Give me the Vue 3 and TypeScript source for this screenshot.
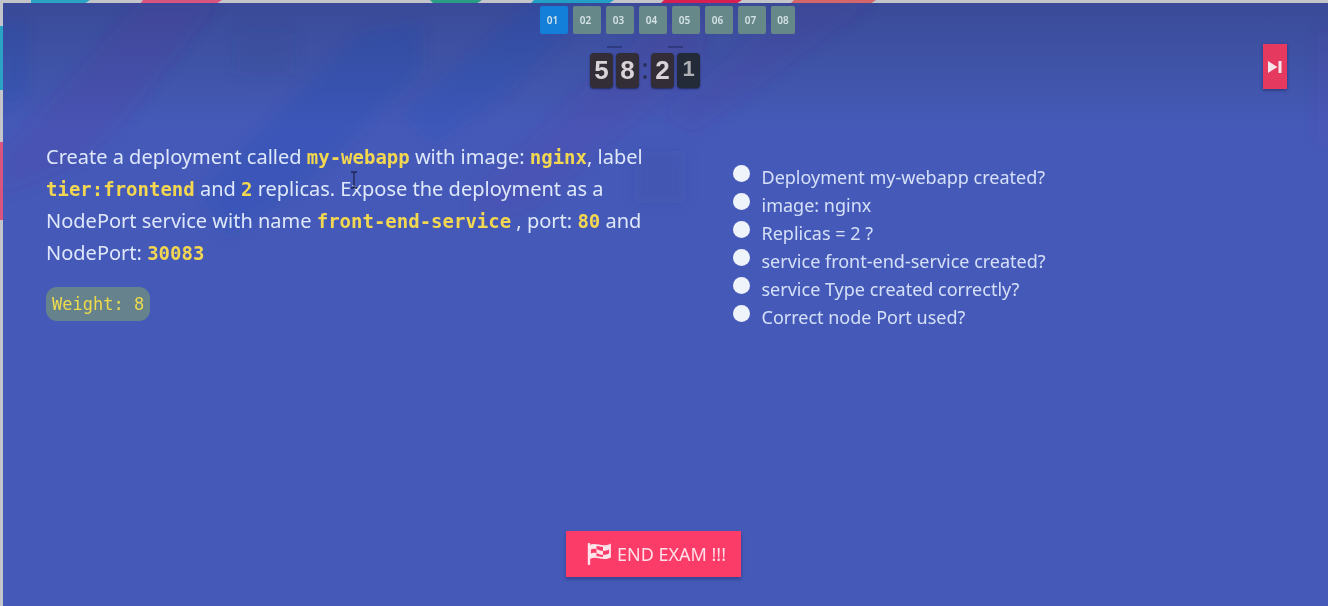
<script setup lang="ts">
import { ref } from 'vue'

interface Part {
  text: string
  code?: boolean
}

const questions: string[] = ['01', '02', '03', '04', '05', '06', '07', '08']
const current = ref('01')

const prompt: Part[] = [
  { text: 'Create a deployment called ' },
  { text: 'my-webapp', code: true },
  { text: ' with image: ' },
  { text: 'nginx', code: true },
  { text: ', label ' },
  { text: 'tier:frontend', code: true },
  { text: ' and ' },
  { text: '2', code: true },
  { text: ' replicas. Expose the deployment as a NodePort service with name ' },
  { text: 'front-end-service', code: true },
  { text: ' , port: ' },
  { text: '80', code: true },
  { text: ' and NodePort: ' },
  { text: '30083', code: true },
]

const checks: string[] = [
  'Deployment my-webapp created?',
  'image: nginx',
  'Replicas = 2 ?',
  'service front-end-service created?',
  'service Type created correctly?',
  'Correct node Port used?',
]
</script>

<template>
  <div class="page">
    <svg class="edge" aria-hidden="true">
      <path fill="#2ba3c4" d="M31 0H90L84 4H31Z" />
      <path fill="#d8557f" d="M143 0H222L216 4H140Z" />
      <path fill="#2b9c86" d="M430 0H482L476 4H434Z" />
      <path fill="#229fc5" d="M534 0H614L608 4H530Z" />
      <path fill="#d81f52" d="M664 0H742L736 4H660Z" />
      <path fill="#d4656a" d="M794 0H876L870 4H790Z" />
      <path fill="#2ba3c4" d="M0 26H4V90H0Z" />
      <path fill="#d8557f" d="M0 142H4V220H0Z" />
    </svg>

    <main class="panel">
      <svg class="streaks" aria-hidden="true">
        <defs>
          <filter id="soft" x="-20%" y="-20%" width="140%" height="140%">
            <feGaussianBlur stdDeviation="7" />
          </filter>
        </defs>
        <g filter="url(#soft)">
          <path fill="#5a2a9c" opacity=".15" d="M137 0H215L128 108Q95 150 50 170L0 190V150Z" />
          <path fill="#1747b8" opacity=".14" d="M355 30L418 20V70L340 145Q300 190 225 235L195 190Z" />
          <path fill="#1747b8" opacity=".14" d="M0 20H24V90L0 110Z" />
          <path fill="#2f3a80" opacity=".13" d="M234 30H290V72H234Z" />
          <path fill="#1747c0" opacity=".13" d="M528 0H600L490 100L430 140L400 110Z" />
          <path fill="#5a2a9c" opacity=".13" d="M640 30L700 10V60L560 180Q520 220 470 215V190Z" />
          <path fill="#5a2a9c" opacity=".12" d="M790 0H868L760 80L690 130L660 110Z" />
          <path fill="#2f3a80" opacity=".1" d="M632 148H682V200H632Z" />
          <path fill="#6a3aac" opacity=".12" d="M1314 30H1330V140H1314Z" />
        </g>
      </svg>

      <nav class="pager" aria-label="Questions">
        <button
          v-for="q in questions"
          :key="q"
          type="button"
          class="page-btn"
          :class="{ active: q === current }"
          @click="current = q"
        >{{ q }}</button>
      </nav>

      <div class="bar">
        <div class="timer" role="timer">
          <div class="pair">
            <span class="digit">5</span><span class="digit">8</span>
          </div>
          <span class="colon"><i></i><i></i></span>
          <div class="pair">
            <span class="digit">2</span><span class="digit flip">1</span>
          </div>
        </div>
        <button type="button" class="skip" aria-label="Next question">
          <svg width="14" height="12" viewBox="0 0 14 12" aria-hidden="true">
            <path fill="#f4e4ec" d="M0 0L9.500 6L0 12ZM10.500 0H13.500V12H10.500Z" />
          </svg>
        </button>
      </div>

      <div class="content">
        <section class="task">
          <p class="prompt"><template v-for="(p, i) in prompt" :key="i"><code v-if="p.code">{{ p.text }}</code><template v-else>{{ p.text }}</template></template></p>
          <span class="weight">Weight: 8</span>
        </section>
        <ul class="checks">
          <li v-for="(c, i) in checks" :key="c">
            <input :id="'check' + i" type="radio" :name="'check' + i" />
            <label :for="'check' + i">{{ c }}</label>
          </li>
        </ul>
      </div>

      <footer class="footer">
        <button type="button" class="end">
          <svg width="24" height="22" viewBox="0 0 24 22" aria-hidden="true">
            <path fill="none" stroke="#ffe3ea" stroke-width="2.400" stroke-linecap="round" d="M2 1V21" />
            <path fill="none" stroke="#ffe3ea" stroke-width="1.800" d="M3 3C9 -1 14 6 23 2V14C14 18 10 11 3 15Z" />
            <path fill="#ffe3ea" d="M3 3Q6 1 9.500 2V6Q6 5 3 7ZM16 4Q20 4 23 2V6Q20 8 16 8ZM9.500 6Q13 8 16 8V12Q13 12 9.500 10ZM3 11Q6 9 9.500 10V13.500Q6 13 3 15ZM16 12Q20 12 23 10V14Q20 16 16 16Z" />
          </svg>
          <span>END EXAM !!!</span>
        </button>
      </footer>

      <svg class="cursor" width="8" height="18" viewBox="0 0 8 18" aria-hidden="true">
        <path fill="none" stroke="#1d2550" stroke-width="1.300" d="M1 1H3L4 2L5 1H7M4 2V16M1 17H3L4 16L5 17H7" />
      </svg>
    </main>
  </div>
</template>

<style>
body {
  margin: 0;
}
</style>

<style scoped>
.page {
  position: relative;
  box-sizing: border-box;
  min-height: 100vh;
  padding: 3px 0 0 3px;
  display: flex;
  background: #c4c4cb;
  font-family: "Noto Sans", "Open Sans", sans-serif;
}
.edge {
  position: absolute;
  inset: 0;
  width: 100%;
  height: 100%;
}
.panel {
  position: relative;
  flex: 1;
  display: flex;
  flex-direction: column;
  background: linear-gradient(#3a4a98 0, #3f53a6 60px, #455ab8 124px);
}
.streaks {
  position: absolute;
  inset: 0;
  width: 100%;
  height: 100%;
}
.pager,
.bar,
.content,
.footer {
  position: relative;
}
button {
  font-family: inherit;
  border: 0;
  cursor: pointer;
}
.pager {
  display: flex;
  justify-content: center;
  gap: 5px;
  padding: 3px 0 0 4px;
}
.page-btn {
  width: 28px;
  height: 28px;
  padding: 0 3px 0 0;
  border-radius: 2px;
  background: #678889;
  color: #d5e2e6;
  font-size: 10px;
  font-weight: 600;
}
.page-btn:last-child {
  width: 24px;
  padding: 0;
}
.page-btn.active {
  background: #147fd8;
}
.bar {
  display: grid;
  grid-template-columns: 1fr auto 1fr;
  align-items: start;
  padding: 10px 41px 0 0;
}
.timer {
  grid-column: 2;
  display: flex;
  gap: 4px;
  padding-top: 9px;
}
.pair {
  position: relative;
  display: flex;
  gap: 3px;
}
.pair::before {
  content: "";
  position: absolute;
  top: -7px;
  left: 17px;
  width: 15px;
  height: 2px;
  background: #303a80;
}
.digit {
  width: 23px;
  height: 35px;
  border-radius: 4px;
  background: #322d36;
  box-shadow: 0 1px 2px #20265a;
  color: #d9d3d8;
  font: bold 26px/35px "Liberation Sans", Arial, sans-serif;
  text-align: center;
}
.flip {
  background: #242b38;
  color: #aeb0b4;
  font-size: 22px;
  line-height: 32px;
}
.colon {
  display: flex;
  flex-direction: column;
  align-items: center;
  justify-content: center;
  gap: 8px;
  width: 4px;
}
.colon i {
  width: 4px;
  height: 4px;
  border-radius: 50%;
  background: #2b3162;
}
.skip {
  justify-self: end;
  display: flex;
  align-items: center;
  justify-content: center;
  width: 24px;
  height: 45px;
  padding: 0;
  background: #e6395f;
  box-shadow: 0 1px 3px #2a3474;
}
.content {
  flex: 1;
  display: grid;
  grid-template-columns: 1fr 1fr;
  padding-top: 52px;
}
.task {
  padding: 0 10px 0 43px;
}
.prompt {
  margin: 0 0 18px;
  color: #dfe8fa;
  font-size: 20px;
  line-height: 32px;
}
code {
  color: #f3d750;
  font: bold 19px/20px "DejaVu Sans Mono", monospace;
}
.weight {
  display: inline-block;
  padding: 0 6px;
  border-radius: 11px;
  background: #65828d;
  color: #eedb4c;
  font: 17px/34px "DejaVu Sans Mono", monospace;
}
.checks {
  margin: 0;
  padding: 22px 40px 0 67px;
  list-style: none;
}
.checks li {
  display: flex;
  align-items: flex-start;
  gap: 12px;
  height: 28px;
}
.checks input {
  appearance: none;
  width: 17px;
  height: 17px;
  margin: 2px 0 0;
  border-radius: 50%;
  background: #eff3fa;
}
.checks input:checked {
  box-shadow: inset 0 0 0 4px #eff3fa;
  background: #2468d8;
}
.checks label {
  color: #d5e0f8;
  font-size: 18px;
  line-height: 28px;
}
.footer {
  display: flex;
  justify-content: center;
  padding: 0 24px 29px 0;
}
.end {
  display: flex;
  align-items: center;
  gap: 6px;
  height: 46px;
  padding: 0 15px 0 21px;
  background: #fb3b68;
  box-shadow: 0 2px 4px #323f88;
  color: #ffdfe8;
  font-size: 18px;
}
.cursor {
  position: absolute;
  left: 347px;
  top: 168px;
}
</style>
